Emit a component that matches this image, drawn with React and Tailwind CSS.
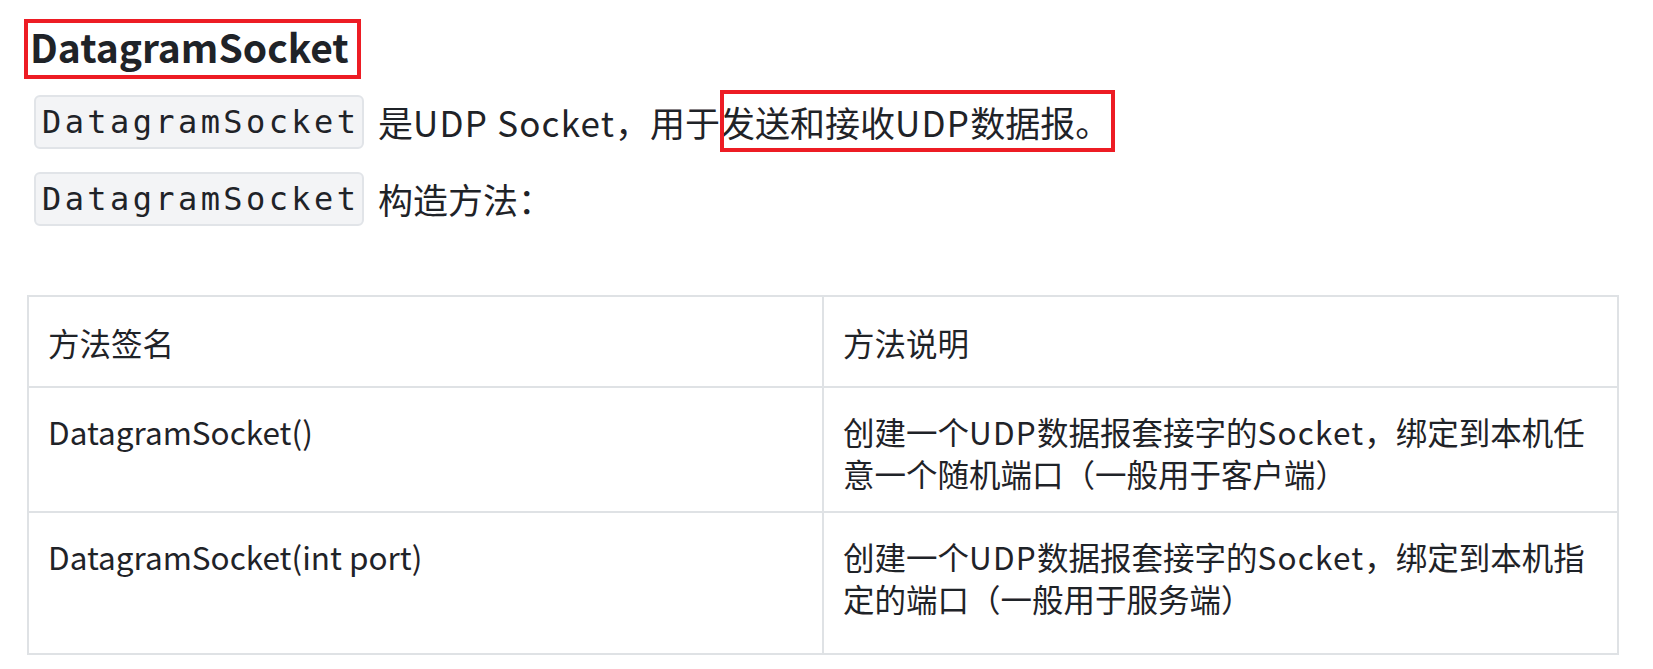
import React from 'react';

// latin words in the reference are a touch wider than Noto's own latin
const L = ({ children }) => <span className="tracking-[1.2px]">{children}</span>;

const rows = [
  {
    sig: 'DatagramSocket()',
    desc: [
      <>创建一个<L>UDP</L>数据报套接字的<L>Socket</L>，绑定到本机任</>,
      <>意一个随机端口（一般用于客户端）</>,
    ],
    h: 'h-[125px]',
  },
  {
    sig: 'DatagramSocket(int port)',
    desc: [
      <>创建一个<L>UDP</L>数据报套接字的<L>Socket</L>，绑定到本机指</>,
      <>定的端口（一般用于服务端）</>,
    ],
    h: 'h-[142px]',
  },
];

function Code({ children }) {
  return (
    <code className="inline-flex items-center h-[54px] w-[330px] pl-[6px] rounded-[6px] border-2 border-[#e1e4e8] bg-[#f3f4f6] font-['DejaVu_Sans_Mono',monospace] text-[32px] tracking-[3.4px] text-[#1f2328]">
      {children}
    </code>
  );
}

export default function App() {
  return (
    <div className="w-[1653px] h-[669px] overflow-hidden bg-white text-[#1f2328] font-['Noto_Sans_CJK_SC',sans-serif]">
      <div className="pt-[19px] pl-[24px]">
        <h2 className="flex items-center h-[60px] w-[337px] border-4 border-[#ed1c24] pl-[2px] pb-[6px] text-[39px] font-bold leading-none">
          DatagramSocket
        </h2>
      </div>

      <div className="pl-[34px] pt-[16px] flex flex-col gap-[23px] text-[35px]">
        <p className="flex items-center h-[54px]">
          <Code>DatagramSocket</Code>
          <span className="ml-[14px] whitespace-nowrap">
            是<L>UDP Socket</L>，用于
            <span className="relative">
              发送和接收<L>UDP</L>数据报。
              <span className="absolute left-[0px] top-[-6px] w-[395px] h-[62px] border-4 border-[#ed1c24]" />
            </span>
          </span>
        </p>
        <p className="flex items-center h-[54px]">
          <Code>DatagramSocket</Code>
          <span className="ml-[14px]">构造方法：</span>
        </p>
      </div>

      <div className="pl-[27px] pt-[69px]">
        <table className="w-[1592px] border-collapse text-[31.5px] leading-[42px] table-fixed">
          <thead>
            <tr className="h-[91px]">
              <th className="w-1/2 border-2 border-[#dfe2e5] px-[19px] text-left font-normal align-middle">方法签名</th>
              <th className="w-1/2 border-2 border-[#dfe2e5] px-[19px] text-left font-normal align-middle">方法说明</th>
            </tr>
          </thead>
          <tbody>
            {rows.map((r) => (
              <tr key={r.sig} className={r.h}>
                <td className="border-2 border-[#dfe2e5] px-[19px] pt-[22px] align-top">{r.sig}</td>
                <td className="border-2 border-[#dfe2e5] px-[19px] pt-[22px] align-top">
                  {r.desc.map((line, i) => (
                    <div key={i} className="whitespace-nowrap">{line}</div>
                  ))}
                </td>
              </tr>
            ))}
          </tbody>
        </table>
      </div>
    </div>
  );
}
